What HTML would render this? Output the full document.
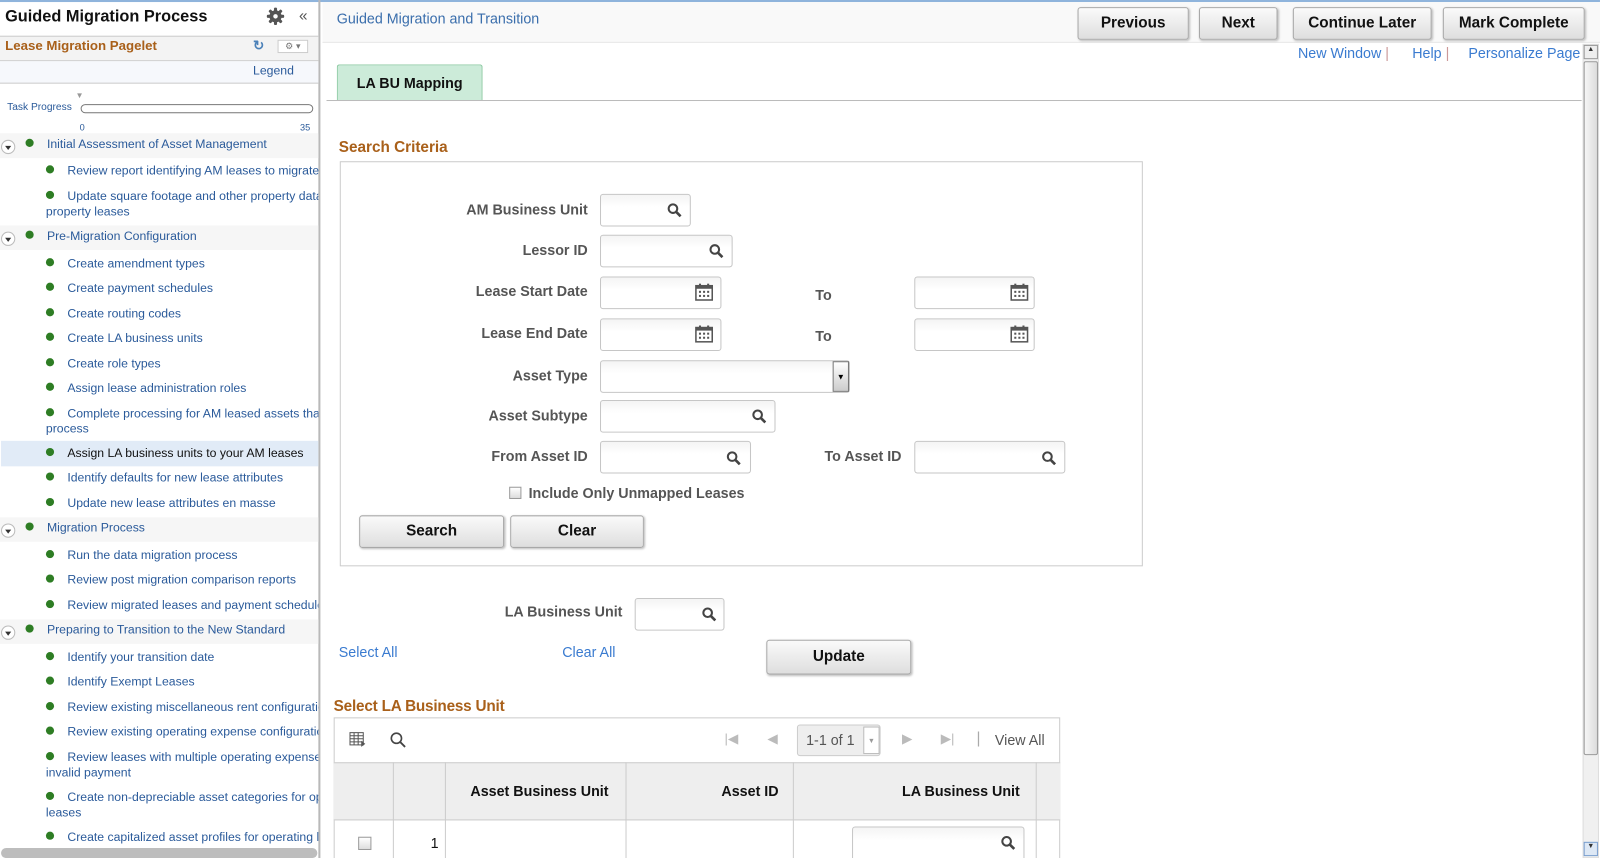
<!DOCTYPE html>
<html><head><meta charset="utf-8"><style>
*{box-sizing:border-box;margin:0;padding:0}
html,body{width:1600px;height:858px;overflow:hidden;background:#fff}
body{font-family:"Liberation Sans",Arial,sans-serif;position:relative}
#w{position:absolute;left:0;top:0;width:1568px;height:841px;transform:scale(1.0204);transform-origin:0 0;overflow:hidden}
.a{position:absolute;white-space:nowrap}
.sb{position:absolute;left:0;top:0;width:314px;height:841px;overflow:hidden;border-right:2px solid #b9b9b9}
.it{position:absolute;left:45px;font-size:12px;color:#2a5a9a;line-height:15px;white-space:nowrap}
.dot{display:inline-block;width:8px;height:8px;border-radius:50%;background:#2e7d24;margin-right:13px;vertical-align:1px}
.sec{position:absolute;left:0;width:314px;height:24px;background:#f6f6f6}
.tg{position:absolute;left:1px;width:14px;height:14px;border:1px solid #bbb;border-radius:50%;background:#fff}
.tg:after{content:"";position:absolute;left:3px;top:5px;border:3px solid transparent;border-top:4px solid #333}
.lbl{position:absolute;font-size:14px;font-weight:bold;color:#555;text-align:right;white-space:nowrap}
.inp{position:absolute;height:32px;border:1px solid #c6c6c6;border-radius:3px;background:linear-gradient(#f4f4f4,#fff 40%)}
.btn{position:absolute;height:32px;border:1px solid #a8a8a8;border-radius:3px;background:linear-gradient(#fafafa,#dedede);box-shadow:1px 1px 2px #bbb;font-size:15px;font-weight:bold;color:#111;text-align:center;line-height:30px}
.lnk{position:absolute;font-size:14px;color:#3a7bd0;white-space:nowrap}
.mag{position:absolute;width:14px;height:14px}
.cal{position:absolute;width:18px;height:18px}
</style></head><body>
<svg width="0" height="0" style="position:absolute"><defs>
<symbol id="m" viewBox="0 0 14 14"><circle cx="5.5" cy="5.5" r="4.2" fill="none" stroke="#444" stroke-width="2"/><path d="M8.5 8.5L13 13" stroke="#444" stroke-width="2.6"/></symbol>
<symbol id="c" viewBox="0 0 18 18"><rect x="1" y="3" width="16" height="14" fill="#fff" stroke="#555" stroke-width="1.5"/><rect x="1" y="3" width="16" height="3" fill="#555"/><rect x="4" y="1" width="2" height="4" fill="#555"/><rect x="12" y="1" width="2" height="4" fill="#555"/><g fill="#555"><rect x="4" y="8" width="2" height="2"/><rect x="8" y="8" width="2" height="2"/><rect x="12" y="8" width="2" height="2"/><rect x="4" y="12" width="2" height="2"/><rect x="8" y="12" width="2" height="2"/><rect x="12" y="12" width="2" height="2"/></g></symbol>
</defs></svg>
<div id="w">
<div style="position:absolute;left:0;top:0;width:1568px;height:2px;background:#8fb4dc"></div>

<div class="sb">
 <div class="a" style="left:5px;top:8px;font-size:16px;font-weight:bold;color:#111">Guided Migration Process</div>
 <svg class="a" style="left:261px;top:7px" width="18" height="18" viewBox="0 0 18 18"><g fill="#555"><rect x="7.5" y="0.5" width="3" height="17" rx="1"/><rect x="7.5" y="0.5" width="3" height="17" rx="1" transform="rotate(45 9 9)"/><rect x="7.5" y="0.5" width="3" height="17" rx="1" transform="rotate(90 9 9)"/><rect x="7.5" y="0.5" width="3" height="17" rx="1" transform="rotate(135 9 9)"/><circle cx="9" cy="9" r="6"/></g><circle cx="9" cy="9" r="2.2" fill="#fff"/></svg>
 <div class="a" style="left:293px;top:7px;font-size:15px;color:#555">«</div>
 <div class="a" style="left:0;top:35px;width:314px;height:25px;background:#f3f3f3;border-top:1px solid #ccc;border-bottom:1px solid #ccc"></div>
 <div class="a" style="left:5px;top:37px;font-size:13px;font-weight:bold;color:#a9601a">Lease Migration Pagelet</div>
 <div class="a" style="left:248px;top:37px;font-size:13px;color:#4a80b8;font-weight:bold">↻</div>
 <div class="a" style="left:272px;top:39px;width:30px;height:13px;border:1px solid #ccc;background:#fff;font-size:9px;color:#777;text-align:center;line-height:11px">⚙ ▾</div>
 <div class="a" style="left:0;top:60px;width:314px;height:22px;background:#f6f8fc;border-bottom:1px solid #ccc"></div>
 <div class="a" style="left:248px;top:62px;font-size:12px;color:#2a5a9a">Legend</div>
 <div class="a" style="left:74px;top:89px;font-size:8px;color:#999">▼</div>
 <div class="a" style="left:7px;top:100px;font-size:10px;color:#2a5a9a">Task Progress</div>
 <div class="a" style="left:79px;top:102px;width:228px;height:9px;border:1px solid #777;border-radius:5px"></div>
 <div class="a" style="left:78px;top:120px;font-size:9px;color:#2a5a9a">0</div>
 <div class="a" style="left:294px;top:120px;font-size:9px;color:#2a5a9a">35</div>
 <div class="a" style="left:0;top:131px;width:314px;height:1px;background:#ddd"></div>

 <div class="sec" style="top:131px"></div><div class="tg" style="top:137px"></div><div class="it" style="top:134px;left:25px"><span class="dot"></span>Initial Assessment of Asset Management</div>
 <div class="it" style="top:160px"><span class="dot"></span>Review report identifying AM leases to migrate</div>
 <div class="it" style="top:185px"><span class="dot"></span>Update square footage and other property data for<br>property leases</div>
 <div class="sec" style="top:221px"></div><div class="tg" style="top:227px"></div><div class="it" style="top:224px;left:25px"><span class="dot"></span>Pre-Migration Configuration</div>
 <div class="it" style="top:251px"><span class="dot"></span>Create amendment types</div>
 <div class="it" style="top:275px"><span class="dot"></span>Create payment schedules</div>
 <div class="it" style="top:300px"><span class="dot"></span>Create routing codes</div>
 <div class="it" style="top:324px"><span class="dot"></span>Create LA business units</div>
 <div class="it" style="top:349px"><span class="dot"></span>Create role types</div>
 <div class="it" style="top:373px"><span class="dot"></span>Assign lease administration roles</div>
 <div class="it" style="top:398px"><span class="dot"></span>Complete processing for AM leased assets that<br>process</div>
 <div class="a" style="left:1px;top:432px;width:313px;height:25px;background:#e1ebf7"></div>
 <div class="it" style="top:437px;color:#111"><span class="dot"></span>Assign LA business units to your AM leases</div>
 <div class="it" style="top:461px"><span class="dot"></span>Identify defaults for new lease attributes</div>
 <div class="it" style="top:486px"><span class="dot"></span>Update new lease attributes en masse</div>
 <div class="sec" style="top:507px"></div><div class="tg" style="top:513px"></div><div class="it" style="top:510px;left:25px"><span class="dot"></span>Migration Process</div>
 <div class="it" style="top:537px"><span class="dot"></span>Run the data migration process</div>
 <div class="it" style="top:561px"><span class="dot"></span>Review post migration comparison reports</div>
 <div class="it" style="top:586px"><span class="dot"></span>Review migrated leases and payment schedules</div>
 <div class="sec" style="top:607px"></div><div class="tg" style="top:613px"></div><div class="it" style="top:610px;left:25px"><span class="dot"></span>Preparing to Transition to the New Standard</div>
 <div class="it" style="top:637px"><span class="dot"></span>Identify your transition date</div>
 <div class="it" style="top:661px"><span class="dot"></span>Identify Exempt Leases</div>
 <div class="it" style="top:686px"><span class="dot"></span>Review existing miscellaneous rent configuration</div>
 <div class="it" style="top:710px"><span class="dot"></span>Review existing operating expense configuration</div>
 <div class="it" style="top:735px"><span class="dot"></span>Review leases with multiple operating expenses<br>invalid payment</div>
 <div class="it" style="top:774px"><span class="dot"></span>Create non-depreciable asset categories for op<br>leases</div>
 <div class="it" style="top:813px"><span class="dot"></span>Create capitalized asset profiles for operating leases</div>
 <div class="a" style="left:1px;top:831px;width:310px;height:10px;border-radius:5px;background:#bdbdbd"></div>
</div>

<!-- header -->
<div class="a" style="left:316px;top:2px;width:1252px;height:40px;background:#f9f9f9;border-bottom:1px solid #e8e8e8"></div>
<div class="a" style="left:330px;top:10px;font-size:14px;color:#3a6eac">Guided Migration and Transition</div>
<div class="btn" style="left:1056px;top:7px;width:109px">Previous</div>
<div class="btn" style="left:1175px;top:7px;width:77px">Next</div>
<div class="btn" style="left:1267px;top:7px;width:136px">Continue Later</div>
<div class="btn" style="left:1414px;top:7px;width:139px">Mark Complete</div>
<div class="lnk" style="left:1272px;top:44px">New Window <span style="color:#c99">|</span></div>
<div class="lnk" style="left:1384px;top:44px">Help <span style="color:#c99">|</span></div>
<div class="lnk" style="left:1439px;top:44px">Personalize Page</div>
<!-- scrollbar -->
<div class="a" style="left:1551px;top:43px;width:16px;height:798px;background:#f0f0f0;border:1px solid #ddd"></div>
<div class="a" style="left:1552px;top:44px;width:14px;height:14px;background:#eee;border:1px solid #999;font-size:7px;text-align:center;color:#333">▲</div>
<div class="a" style="left:1552px;top:60px;width:14px;height:680px;background:linear-gradient(90deg,#f6f6f6,#ddd);border:1px solid #999;border-radius:2px"></div>
<div class="a" style="left:1552px;top:825px;width:14px;height:14px;background:#dde8f5;border:1px solid #7a9fcf;font-size:7px;text-align:center;color:#333">▼</div>

<!-- tab -->
<div class="a" style="left:330px;top:63px;width:143px;height:35px;background:#ccebd9;border:1px solid #8cc9a2;border-bottom:none;border-radius:3px 3px 0 0;font-size:14px;font-weight:bold;color:#111;text-align:center;line-height:34px">LA BU Mapping</div>
<div class="a" style="left:320px;top:98px;width:1230px;height:1px;background:#bbb"></div>

<div class="a" style="left:332px;top:136px;font-size:15px;font-weight:bold;color:#a9601a">Search Criteria</div>
<div class="a" style="left:333px;top:158px;width:787px;height:397px;border:1px solid #ccc"></div>

<div class="lbl" style="right:992px;top:197px">AM Business Unit</div>
<div class="inp" style="left:588px;top:190px;width:89px"></div><svg class="mag" style="left:654px;top:199px"><use href="#m"/></svg>
<div class="lbl" style="right:992px;top:237px">Lessor ID</div>
<div class="inp" style="left:588px;top:230px;width:130px"></div><svg class="mag" style="left:695px;top:239px"><use href="#m"/></svg>
<div class="lbl" style="right:992px;top:277px">Lease Start Date</div>
<div class="inp" style="left:588px;top:271px;width:119px"></div><svg class="cal" style="left:681px;top:277px"><use href="#c"/></svg>
<div class="lbl" style="left:799px;top:281px">To</div>
<div class="inp" style="left:896px;top:271px;width:118px"></div><svg class="cal" style="left:990px;top:277px"><use href="#c"/></svg>
<div class="lbl" style="right:992px;top:318px">Lease End Date</div>
<div class="inp" style="left:588px;top:312px;width:119px"></div><svg class="cal" style="left:681px;top:318px"><use href="#c"/></svg>
<div class="lbl" style="left:799px;top:321px">To</div>
<div class="inp" style="left:896px;top:312px;width:118px"></div><svg class="cal" style="left:990px;top:318px"><use href="#c"/></svg>
<div class="lbl" style="right:992px;top:360px">Asset Type</div>
<div class="inp" style="left:588px;top:353px;width:245px"></div>
<div class="a" style="left:816px;top:354px;width:16px;height:30px;border:1px solid #777;background:linear-gradient(#fff,#ccc);font-size:8px;text-align:center;line-height:30px">▼</div>
<div class="lbl" style="right:992px;top:399px">Asset Subtype</div>
<div class="inp" style="left:588px;top:392px;width:172px"></div><svg class="mag" style="left:737px;top:401px"><use href="#m"/></svg>
<div class="lbl" style="right:992px;top:439px">From Asset ID</div>
<div class="inp" style="left:588px;top:432px;width:148px"></div><svg class="mag" style="left:712px;top:442px"><use href="#m"/></svg>
<div class="lbl" style="left:808px;top:439px">To Asset ID</div>
<div class="inp" style="left:896px;top:432px;width:148px"></div><svg class="mag" style="left:1021px;top:442px"><use href="#m"/></svg>
<div class="a" style="left:499px;top:477px;width:12px;height:12px;border:1px solid #999;background:linear-gradient(#fff,#ddd)"></div>
<div class="lbl" style="left:518px;top:475px">Include Only Unmapped Leases</div>
<div class="btn" style="left:352px;top:505px;width:142px">Search</div>
<div class="btn" style="left:500px;top:505px;width:131px">Clear</div>

<div class="lbl" style="right:958px;top:591px">LA Business Unit</div>
<div class="inp" style="left:622px;top:586px;width:88px"></div><svg class="mag" style="left:688px;top:595px"><use href="#m"/></svg>
<div class="lnk" style="left:332px;top:631px">Select All</div>
<div class="lnk" style="left:551px;top:631px">Clear All</div>
<div class="btn" style="left:751px;top:627px;width:142px;height:34px;line-height:32px">Update</div>

<div class="a" style="left:327px;top:684px;font-size:15px;font-weight:bold;color:#a9601a;letter-spacing:-0.2px">Select LA Business Unit</div>
<div class="a" style="left:327px;top:703px;width:712px;height:155px;border:1px solid #ccc"></div>
<svg class="a" style="left:342px;top:717px" width="17" height="16" viewBox="0 0 17 16"><rect x="1" y="1" width="13" height="12" fill="#fff" stroke="#555"/><path d="M1 4h13M1 7h13M1 10h13M5 1v12M9 1v12" stroke="#555"/><path d="M12 9l4 3-4 3z" fill="#555"/></svg>
<svg class="a" style="left:382px;top:717px" width="16" height="16" viewBox="0 0 16 16"><circle cx="6.5" cy="6.5" r="5" fill="none" stroke="#444" stroke-width="1.6"/><path d="M10 10l5 5" stroke="#444" stroke-width="1.8"/></svg>
<div class="a" style="left:710px;top:716px;font-size:13px;color:#bbb">|◀</div>
<div class="a" style="left:752px;top:716px;font-size:13px;color:#bbb">◀</div>
<div class="a" style="left:781px;top:710px;width:82px;height:31px;background:#eee;border:1px solid #ccc;border-radius:3px"></div>
<div class="a" style="left:790px;top:717px;font-size:14px;color:#555">1-1 of 1</div>
<div class="a" style="left:846px;top:712px;width:16px;height:27px;border:1px solid #bbb;background:#fff;font-size:7px;color:#999;text-align:center;line-height:27px">▼</div>
<div class="a" style="left:884px;top:716px;font-size:13px;color:#bbb">▶</div>
<div class="a" style="left:922px;top:716px;font-size:13px;color:#bbb">▶|</div>
<div class="a" style="left:957px;top:715px;font-size:15px;color:#aaa">|</div>
<div class="a" style="left:975px;top:717px;font-size:14px;color:#555">View All</div>
<div class="a" style="left:327px;top:747px;width:712px;height:57px;background:#eee;border-top:1px solid #ccc;border-bottom:1px solid #ccc"></div>
<div class="a" style="left:385px;top:747px;width:1px;height:111px;background:#ccc"></div>
<div class="a" style="left:436px;top:747px;width:1px;height:111px;background:#ccc"></div>
<div class="a" style="left:613px;top:747px;width:1px;height:111px;background:#ccc"></div>
<div class="a" style="left:777px;top:747px;width:1px;height:111px;background:#ccc"></div>
<div class="a" style="left:1015px;top:747px;width:1px;height:111px;background:#ccc"></div>
<div class="a" style="left:461px;top:767px;font-size:14px;font-weight:bold;color:#111">Asset Business Unit</div>
<div class="a" style="left:707px;top:767px;font-size:14px;font-weight:bold;color:#111">Asset ID</div>
<div class="a" style="left:884px;top:767px;font-size:14px;font-weight:bold;color:#111">LA Business Unit</div>
<div class="a" style="left:351px;top:820px;width:13px;height:13px;border:1px solid #999;background:linear-gradient(#fff,#ddd)"></div>
<div class="a" style="left:422px;top:818px;font-size:14px;color:#111">1</div>
<div class="inp" style="left:835px;top:810px;width:169px;height:34px"></div><svg class="mag" style="left:981px;top:819px"><use href="#m"/></svg>
</div>
</body></html>
